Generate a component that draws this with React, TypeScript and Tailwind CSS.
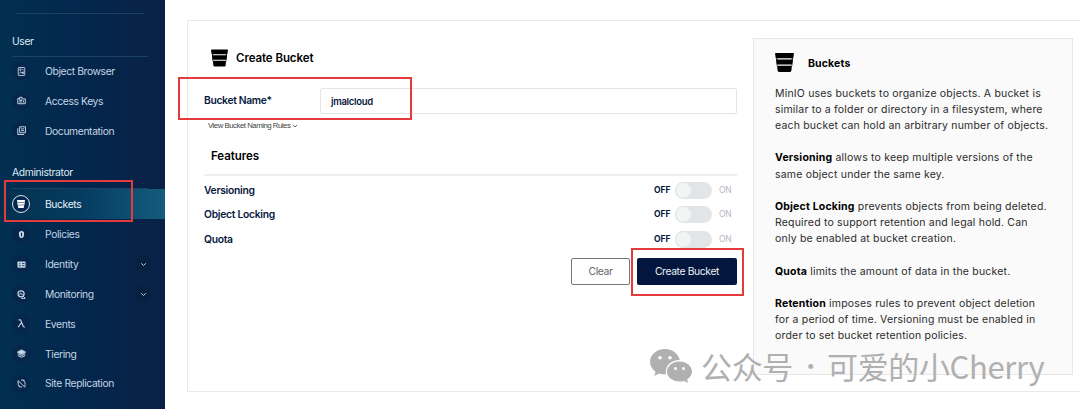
import React from "react";

function BucketIcon({ className }: { className: string }) {
  return (
    <svg viewBox="0 0 18 18" className={className} fill="currentColor">
      <path d="M0.7 0H17.3Q18 0 17.9 .8L17.3 5H.7L.1 .8Q0 0 .7 0Z" />
      <path d="M1.2 6.1H16.8L16.300 10.900H1.700Z" />
      <path d="M2 12H16L15.500 16.900Q15.300 18 14.200 18H3.800Q2.700 18 2.500 16.900Z" />
      <path d="M1 5h1.200v7.500H1.800zM17 5h-1.200v7.500h.4z" />
    </svg>
  );
}

const line = { fill: "none", stroke: "currentColor", strokeWidth: 1.1 };

const icons: Record<string, React.ReactNode> = {
  "Object Browser": (
    <g {...line} strokeWidth="1">
      <rect x="1.4" y="0.6" width="7.2" height="8.8" rx="0.6" />
      <circle cx="3.8" cy="3" r="0.9" />
      <path d="M5.8 2l1.4 1.700M2.800 7.200l1.500-1.900 1.300 1.300M6.200 5.500h1.200v1.700H6z" />
    </g>
  ),
  "Access Keys": (
    <g {...line}>
      <path d="M3 2.8H.9V8.600H9.200V3.200H6.500M3 5V1.400h2.600V5zM2.400 6.700h3.200M7.200 5v2.200" />
    </g>
  ),
  Documentation: (
    <g {...line}>
      <path d="M2.900 .9h6.500v6.600H2.900zM.9 2.500v7h7M4.400 3.200h3.500M4.400 5.200h3.500" />
    </g>
  ),
  Policies: (
    <g>
      <path fill="currentColor" d="M5 .8l2.800 1.300v3.500C7.800 7.600 6.500 8.700 5 9.300 3.500 8.700 2.200 7.600 2.200 5.600V2.100z" />
      <path d="M5 3v4" stroke="#06264b" strokeWidth="1.3" />
    </g>
  ),
  Identity: (
    <g>
      <rect x="0.5" y="1.700" width="9" height="6.800" rx="0.7" fill="currentColor" />
      <path d="M5.700 3.900h2.600M5.700 6.200h2.600M2 6.500h2.300M3.200 3.200v1.700" stroke="#06264b" strokeWidth="0.9" />
    </g>
  ),
  Monitoring: (
    <g {...line}>
      <circle cx="4.500" cy="4.300" r="3.400" strokeWidth="1.4" />
      <path d="M6.800 6.800l2.500 2.500M4.500 9.300h4.500" strokeWidth="1.1" />
      <path d="M2.400 4.600h1.200l.7-1.400.8 2.100.6-.7h.9" strokeWidth="0.9" />
    </g>
  ),
  Events: (
    <path d="M1.800 1h1.700q.6 0 .9.900L7 8.400q.3.700 1.700.4M4.800 4.200L1.300 9.200" {...line} strokeWidth="1.3" />
  ),
  Tiering: (
    <g>
      <path fill="currentColor" d="M5 .9L9.300 3v1.200L5 6.200.7 4.200V3z" stroke="currentColor" strokeWidth=".6" />
      <path d="M.8 5.500L5 7.400l4.200-1.900M.9 7.300L5 9.200l4.100-1.900" {...line} />
    </g>
  ),
  "Site Replication": (
    <path
      d="M4.500 1.200A3.900 3.900 0 0 1 8.900 6M5.700 8.900A3.900 3.900 0 0 1 1.300 4M1 1.500L8.800 9.200M1.200 4.300V2M3.400 9L1.200 7.300M8.900 6.200V8.500M6.500 .8l2.200 1.600"
      {...line}
    />
  ),
};

function NavItem({ label, active, expandable }: { label: string; active?: boolean; expandable?: boolean }) {
  return (
    <div
      className={
        active
          ? "flex h-[30px] items-center bg-linear-to-r from-[#02304f] via-[#063c60] to-[#155c7e] pl-3 pt-px text-[#e8f1f8]"
          : "flex h-[29.9px] items-center pl-3 pt-px text-[#c3d4e3]"
      }
    >
      {active ? (
        <span className="flex size-[18px] items-center justify-center rounded-full border border-[#dbe6ee] bg-[#06264b]">
          <BucketIcon className="size-2 text-white" />
        </span>
      ) : (
        <span className="flex size-[18px] items-center justify-center rounded-full bg-[#06264b]">
          <svg viewBox="0 0 10 10" className="size-[9px]">
            {icons[label]}
          </svg>
        </span>
      )}
      <span className="ml-[15px] flex-1 whitespace-nowrap pt-px text-[10.3px] tracking-[-0.37px]">{label}</span>
      {expandable && (
        <span className="mr-[14px] flex size-4 items-center justify-center rounded-full bg-[#06203f]">
          <svg viewBox="0 0 8 8" className="size-[7px]">
            <path d="M1.4 2.6L4 5.2l2.6-2.6" {...line} />
          </svg>
        </span>
      )}
    </div>
  );
}

function FeatureRow({ label }: { label: string }) {
  return (
    <div className="flex h-[24.5px] items-center text-[#07193e]">
      <span className="flex-1 text-[10.3px] font-semibold tracking-[-0.28px]">{label}</span>
      <span className="w-[21px] text-[8.5px] font-bold">OFF</span>
      <span className="flex h-[17px] w-[37px] items-center rounded-full bg-[#e2e5e6]">
        <span className="size-[17px] rounded-full border border-[#e0e4e4] bg-[#f1f4f4]" />
      </span>
      <span className="ml-[7px] w-[18px] text-[8.5px] tracking-[-0.2px] text-[#b5b8bc]">ON</span>
    </div>
  );
}

export default function App() {
  return (
    <div className="relative flex h-[409px] w-[1080px] overflow-hidden bg-white font-['Inter',sans-serif]">
      <aside className="w-[165px] shrink-0 bg-linear-to-r from-[#022f50] via-[#03264d] to-[#0a2146]">
        <div className="ml-4 mt-[13px] h-px w-32 bg-[#1b4262]" />
        <div className="ml-3 mt-[19px] h-4 text-[10.3px] leading-4 tracking-[-0.35px] text-[#dfe9f1]">User</div>
        <div className="ml-3 mt-[7px] h-px w-[136px] bg-[#1b4262]" />
        <div className="-mt-[1.4px]">
          <NavItem label="Object Browser" />
          <NavItem label="Access Keys" />
          <NavItem label="Documentation" />
        </div>
        <div className="ml-3 mt-[19px] h-4 text-[10.3px] leading-4 tracking-[-0.35px] text-[#dfe9f1]">
          Administrator
        </div>
        <div className="ml-3 mt-[7.500px] h-px w-[136px] bg-[#1b4262]" />
        <NavItem label="Buckets" active />
        <NavItem label="Policies" />
        <NavItem label="Identity" expandable />
        <NavItem label="Monitoring" expandable />
        <NavItem label="Events" />
        <NavItem label="Tiering" />
        <NavItem label="Site Replication" />
      </aside>

      <main className="ml-[22px] mt-5 flex h-[372px] w-[910px] shrink-0 border border-[#e9e9e9]">
        <section className="ml-4 w-[533px]">
          <div className="ml-[7px] mt-[28px] flex h-[18px] items-center">
            <BucketIcon className="h-[18px] w-[17px] text-black" />
            <h1 className="ml-2 pt-[2px] text-[11.5px] font-semibold tracking-[-0.08px] text-black">Create Bucket</h1>
          </div>
          <div className="mt-[21px] flex h-[26px] items-center text-[#07193e]">
            <label className="w-[116px] text-[10.3px] font-semibold tracking-[-0.33px]">Bucket Name*</label>
            <div className="flex h-full flex-1 items-center rounded-xs border border-[#e5e5e5] pl-[10px] pt-[2px] text-[9.5px] font-semibold tracking-[-0.3px]">
              jmalcloud
            </div>
          </div>
          <div className="ml-1 mt-[6px] flex h-3 items-center font-['Liberation_Sans',sans-serif] text-[7.8px] tracking-[-0.48px] text-[#444]">
            View Bucket Naming Rules
            <svg viewBox="0 0 8 8" className="ml-[2px] size-[6px]">
              <path d="M1 2.600L4 5.200l3-2.600" {...line} />
            </svg>
          </div>
          <h2 className="ml-[7px] mt-4 h-4 text-[11.5px] font-semibold leading-4 tracking-[-0.05px] text-black">
            Features
          </h2>
          <div className="mt-[10px] h-[2px] bg-[#efefef]" />
          <div className="mt-[2px]">
            <FeatureRow label="Versioning" />
            <FeatureRow label="Object Locking" />
            <FeatureRow label="Quota" />
          </div>
          <div className="mt-[6px] flex justify-end gap-[7px] text-[10.3px] tracking-[-0.36px]">
            <button className="h-[27px] w-[59px] rounded-xs border border-[#777] pt-px text-[#666]">Clear</button>
            <button className="h-[27px] w-[100px] rounded-xs bg-[#03163d] pt-px text-[#edf0f5]">Create Bucket</button>
          </div>
        </section>

        <aside className="ml-4 mt-[17px] h-[337px] w-[320px] border border-[#e7e7e7] bg-[#fafafa] pl-[21px]">
          <div className="mt-[14px] flex h-[19px] items-center">
            <BucketIcon className="h-[19px] w-[19px] text-black" />
            <h3 className="ml-[14px] pt-[2px] text-[10.5px] font-bold tracking-[0.15px] text-black">Buckets</h3>
          </div>
          <div className="mt-[13.500px] whitespace-nowrap text-[10.5px] leading-[16.2px] tracking-[0.19px] text-[#2b2b2b] [&_b]:font-bold [&_b]:text-black">
            <p>
              MinIO uses buckets to organize objects. A bucket is
              <br />
              similar to a folder or directory in a filesystem, where
              <br />
              each bucket can hold an arbitrary number of objects.
            </p>
            <p className="mt-[16.2px]">
              <b>Versioning</b> allows to keep multiple versions of the
              <br />
              same object under the same key.
            </p>
            <p className="mt-[16.2px]">
              <b>Object Locking</b> prevents objects from being deleted.
              <br />
              Required to support retention and legal hold. Can
              <br />
              only be enabled at bucket creation.
            </p>
            <p className="mt-[16.2px]">
              <b>Quota</b> limits the amount of data in the bucket.
            </p>
            <p className="mt-[16.2px]">
              <b>Retention</b> imposes rules to prevent object deletion
              <br />
              for a period of time. Versioning must be enabled in
              <br />
              order to set bucket retention policies.
            </p>
          </div>
        </aside>
      </main>

      <div className="absolute left-[4px] top-[180px] h-[42px] w-[129px] border-2 border-[#e53b3b]" />
      <div className="absolute left-[178px] top-[77px] h-[43px] w-[234px] border-2 border-[#e53b3b]" />
      <div className="absolute left-[631px] top-[248px] h-[48px] w-[113px] border-2 border-[#e53b3b]" />

      <div className="absolute left-[650px] top-[346px] flex h-10 items-center text-[#b0b0b0]">
        <svg viewBox="0 0 42 34" className="h-[34px] w-[42px]">
          <path
            fill="currentColor"
            d="M15 0C6.700 0 0 5.700 0 12.800c0 4 2.200 7.500 5.600 9.900L4.300 27l5-2.600c1.800.6 3.700.9 5.700.9h1A11 11 0 0 1 15.800 22.500C15.800 16 22 11 29.300 11h.5C28.500 4.800 22.300 0 15 0Z"
          />
          <path
            fill="currentColor"
            d="M29.500 12.500C22.600 12.500 17 17 17 22.600s5.600 10 12.500 10c1.600 0 3.200-.2 4.600-.7l4 2.100-1-3.500c3-1.900 4.900-4.700 4.900-7.900 0-5.600-5.600-10.100-12.500-10.100Z"
          />
          <g fill="#fff">
            <circle cx="10" cy="8.800" r="1.800" />
            <circle cx="20" cy="8.800" r="1.800" />
            <circle cx="25.500" cy="19.500" r="1.500" />
            <circle cx="33.500" cy="19.500" r="1.500" />
          </g>
        </svg>
        <div className="-mt-px ml-[9px] flex whitespace-nowrap font-['Noto_Sans_CJK_SC',sans-serif] text-[31px] font-normal leading-8 tracking-[-0.35px]">
          <span className="w-[93px]">公众号</span>
          <span className="w-[33px] text-center font-['Inter',sans-serif] font-semibold">·</span>
          <span>可爱的小Cherry</span>
        </div>
      </div>
    </div>
  );
}
